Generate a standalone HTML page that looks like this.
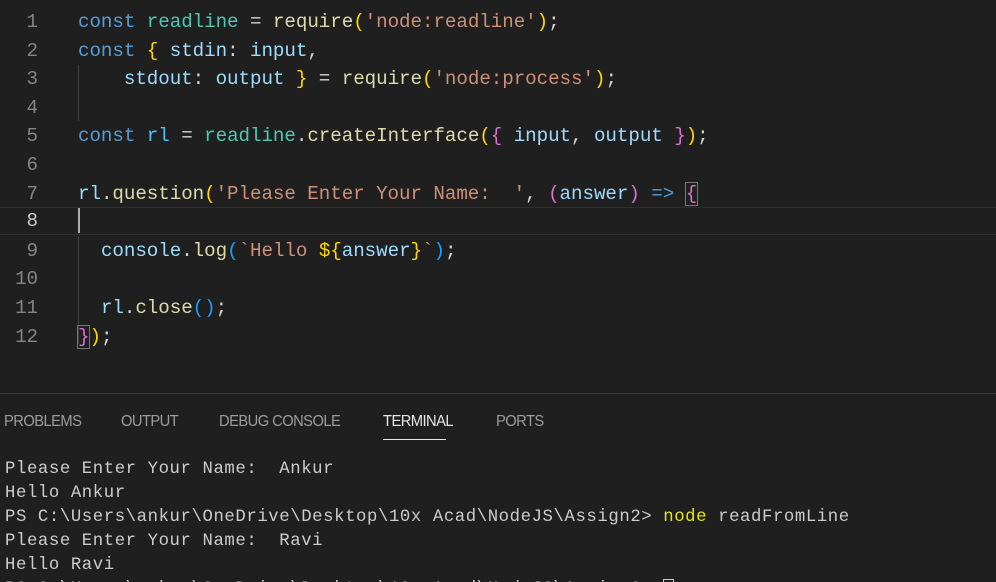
<!DOCTYPE html>
<html><head><meta charset="utf-8"><style>
html,body{margin:0;padding:0;background:#1f1f1f;width:996px;height:582px;overflow:hidden;position:relative}
.l{position:absolute;left:0;height:28.6px;line-height:28.6px;font-family:"Liberation Mono",monospace;font-size:19.2px;white-space:pre;color:#d4d4d4;letter-spacing:-0.05px}
.n{position:absolute;width:38px;text-align:right;color:#858585}
.c{position:absolute;left:78px}
.k{color:#569cd6}.t{color:#4ec9b0}.f{color:#dcdcaa}.s{color:#ce9178}.y{color:#ffd700}.p{color:#da70d6}.v{color:#9cdcfe}.b{color:#179fff}
.tab{position:absolute;top:413px;font-family:"Liberation Sans",sans-serif;font-size:16px;color:#9d9d9d;letter-spacing:-0.6px;transform:scaleX(0.92);transform-origin:left}
.tm{position:absolute;left:5px;font-family:"Liberation Mono",monospace;font-size:17.3px;color:#cccccc;white-space:pre;line-height:24px;letter-spacing:0.6px}
</style></head><body>
<div style="position:absolute;left:0;right:0;top:207px;height:26px;border-top:1px solid #2e2e2e;border-bottom:1px solid #2e2e2e"></div>
<div style="position:absolute;left:78px;top:65px;width:1px;height:56px;background:#404040"></div>
<div style="position:absolute;left:78px;top:236px;width:1px;height:108px;background:#404040"></div>
<div style="position:absolute;left:78px;top:208px;width:2px;height:25px;background:#aeafad"></div>
<div class="l" style="top:8px"><span class="n">1</span><span class="c"><span class="k">const</span> <span class="t">readline</span> = <span class="f">require</span><span class="y">(</span><span class="s">'node:readline'</span><span class="y">)</span>;</span></div>
<div class="l" style="top:36.6px"><span class="n">2</span><span class="c"><span class="k">const</span> <span class="y">{</span> <span class="v">stdin</span>: <span class="v">input</span>,</span></div>
<div class="l" style="top:65.2px"><span class="n">3</span><span class="c">    <span class="v">stdout</span>: <span class="v">output</span> <span class="y">}</span> = <span class="f">require</span><span class="y">(</span><span class="s">'node:process'</span><span class="y">)</span>;</span></div>
<div class="l" style="top:93.8px"><span class="n">4</span></div>
<div class="l" style="top:122.4px"><span class="n">5</span><span class="c"><span class="k">const</span> <span class="v" style="color:#4fc1ff">rl</span> = <span class="t">readline</span>.<span class="f">createInterface</span><span class="y">(</span><span class="p">{</span> <span class="v">input</span>, <span class="v">output</span> <span class="p">}</span><span class="y">)</span>;</span></div>
<div class="l" style="top:151px"><span class="n">6</span></div>
<div class="l" style="top:179.6px"><span class="n">7</span><span class="c"><span class="v">rl</span>.<span class="f">question</span><span class="y">(</span><span class="s">'Please Enter Your Name:  '</span>, <span class="p">(</span><span class="v">answer</span><span class="p">)</span> <span class="k">=&gt;</span> <span class="p" style="outline:1px solid #777">{</span></span></div>
<div class="l" style="top:207.2px"><span class="n" style="color:#ccc">8</span></div>
<div class="l" style="top:236.8px"><span class="n">9</span><span class="c">  <span class="v">console</span>.<span class="f">log</span><span class="b">(</span><span class="s">`Hello </span><span class="y">${</span><span class="v">answer</span><span class="y">}</span><span class="s">`</span><span class="b">)</span>;</span></div>
<div class="l" style="top:265.4px"><span class="n">10</span></div>
<div class="l" style="top:294px"><span class="n">11</span><span class="c">  <span class="v">rl</span>.<span class="f">close</span><span class="b">()</span>;</span></div>
<div class="l" style="top:322.6px"><span class="n">12</span><span class="c"><span class="p" style="outline:1px solid #777">}</span><span class="y">)</span>;</span></div>
<div style="position:absolute;left:0;right:0;top:393px;height:1px;background:#3a3a3a"></div>
<span class="tab" style="left:4px">PROBLEMS</span>
<span class="tab" style="left:121px">OUTPUT</span>
<span class="tab" style="left:219px">DEBUG CONSOLE</span>
<span class="tab" style="left:383px;color:#e7e7e7">TERMINAL</span>
<span class="tab" style="left:496px">PORTS</span>
<div style="position:absolute;left:383px;top:439px;width:63px;height:1px;background:#e7e7e7"></div>
<div class="tm" style="top:458px">Please Enter Your Name:  Ankur
Hello Ankur
PS C:\Users\ankur\OneDrive\Desktop\10x Acad\NodeJS\Assign2&gt; <span style="color:#e5e510">node</span> readFromLine
Please Enter Your Name:  Ravi
Hello Ravi
PS C:\Users\ankur\OneDrive\Desktop\10x Acad\NodeJS\Assign2&gt; <span style="display:inline-block;width:9px;height:17px;border:1px solid #ccc;vertical-align:middle"></span></div>
</body></html>
